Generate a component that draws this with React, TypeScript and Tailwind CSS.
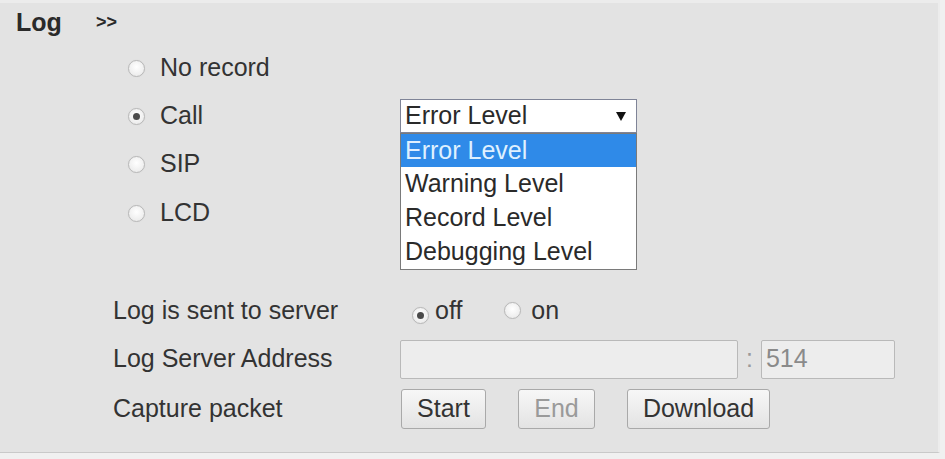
import React from "react";

function Radio({ checked }: { checked?: boolean }) {
  return (
    <span className="inline-flex h-[17px] w-[17px] shrink-0 items-center justify-center rounded-full border border-[#b8b8b8] bg-[radial-gradient(circle_at_50%_40%,#ffffff,#e6e6e6)] shadow-[0_0_1px_#cfcfcf]">
      {checked && <span className="h-[7px] w-[7px] rounded-full bg-[#4a4a4a]" />}
    </span>
  );
}

function Btn({ children, disabled, w }: { children: React.ReactNode; disabled?: boolean; w: string }) {
  return (
    <div
      className={`flex h-[40px] items-center justify-center rounded-[3px] border border-[#a9a9a9] bg-gradient-to-b from-[#f7f7f7] to-[#e3e3e3] ${w} ${disabled ? "text-[#9a9a9a]" : "text-[#333]"}`}
    >
      {children}
    </div>
  );
}

export default function App() {
  return (
    <div className="relative h-[459px] w-[945px] overflow-hidden bg-[#f0f0f0] font-['Liberation_Sans',Arial,sans-serif] text-[25px] text-[#333]">
      <div className="h-[453px] w-[940px] border-t-[3px] border-b border-r-[2px] border-t-[#ececec] border-b-[#c9c9c9] border-r-[#ececec] bg-[#e3e3e3]">
        {/* Header */}
        <div className="flex h-[41px] items-start pl-[16px] pt-[4px]">
          <span className="w-[80px] text-[25px] font-bold leading-[30px] text-[#2a2a2a]">Log</span>
          <span className="text-[18px] font-bold leading-[30px] text-[#2a2a2a]">&gt;&gt;</span>
        </div>

        {/* Radio group */}
        <div className="flex flex-col pl-[128px]">
          <div className="flex h-[48px] items-center">
            <Radio />
            <span className="ml-[15px]">No record</span>
          </div>
          <div className="flex h-[48px] items-center">
            <Radio checked />
            <span className="ml-[15px] w-[240px]">Call</span>
            <div className="relative">
              <div className="flex h-[34px] w-[237px] items-center justify-between border border-[#7f8497] bg-white pl-[4px] pr-[10px] text-[#2a2a2a]">
                <span>Error Level</span>
                <svg width="10" height="9" viewBox="0 0 10 9">
                  <path d="M0 0 L10 0 L5 9 Z" fill="#111" />
                </svg>
              </div>
              <div className="absolute left-0 top-full z-10 flex w-[237px] flex-col border border-[#7a7a7a] bg-white text-[#2a2a2a]">
                <div className="flex h-[33px] items-center bg-[#2f8ae8] pl-[4px] text-[#dff0ff]">Error Level</div>
                <div className="flex h-[34px] items-center pl-[4px]">Warning Level</div>
                <div className="flex h-[33px] items-center pl-[4px]">Record Level</div>
                <div className="flex h-[35px] items-center pl-[4px]">Debugging Level</div>
              </div>
            </div>
          </div>
          <div className="flex h-[48px] items-center">
            <Radio />
            <span className="ml-[15px]">SIP</span>
          </div>
          <div className="flex h-[50px] items-center">
            <Radio />
            <span className="ml-[15px]">LCD</span>
          </div>
        </div>

        {/* Settings */}
        <div className="mt-[49px] flex flex-col pl-[113px]">
          <div className="flex h-[48px] items-center">
            <span className="w-[287px]">Log is sent to server</span>
            <span className="ml-[12px]"><Radio checked /></span>
            <span className="ml-[6px]">off</span>
            <span className="ml-[42px]"><Radio /></span>
            <span className="ml-[10px]">on</span>
          </div>
          <div className="flex h-[48px] items-center">
            <span className="w-[287px]">Log Server Address</span>
            <div className="h-[39px] w-[338px] rounded-[2px] border border-[#b9b9b9] bg-[#ededed]" />
            <span className="mx-[8px] text-[#9a9a9a]">:</span>
            <div className="flex h-[39px] w-[134px] items-center rounded-[2px] border border-[#b9b9b9] bg-[#ededed] pl-[4px] text-[#8a8a8a]">
              514
            </div>
          </div>
          <div className="flex h-[52px] items-center">
            <span className="w-[288px]">Capture packet</span>
            <Btn w="w-[85px]">Start</Btn>
            <div className="w-[32px]" />
            <Btn w="w-[77px]" disabled>End</Btn>
            <div className="w-[32px]" />
            <Btn w="w-[143px]">Download</Btn>
          </div>
        </div>
      </div>
    </div>
  );
}
